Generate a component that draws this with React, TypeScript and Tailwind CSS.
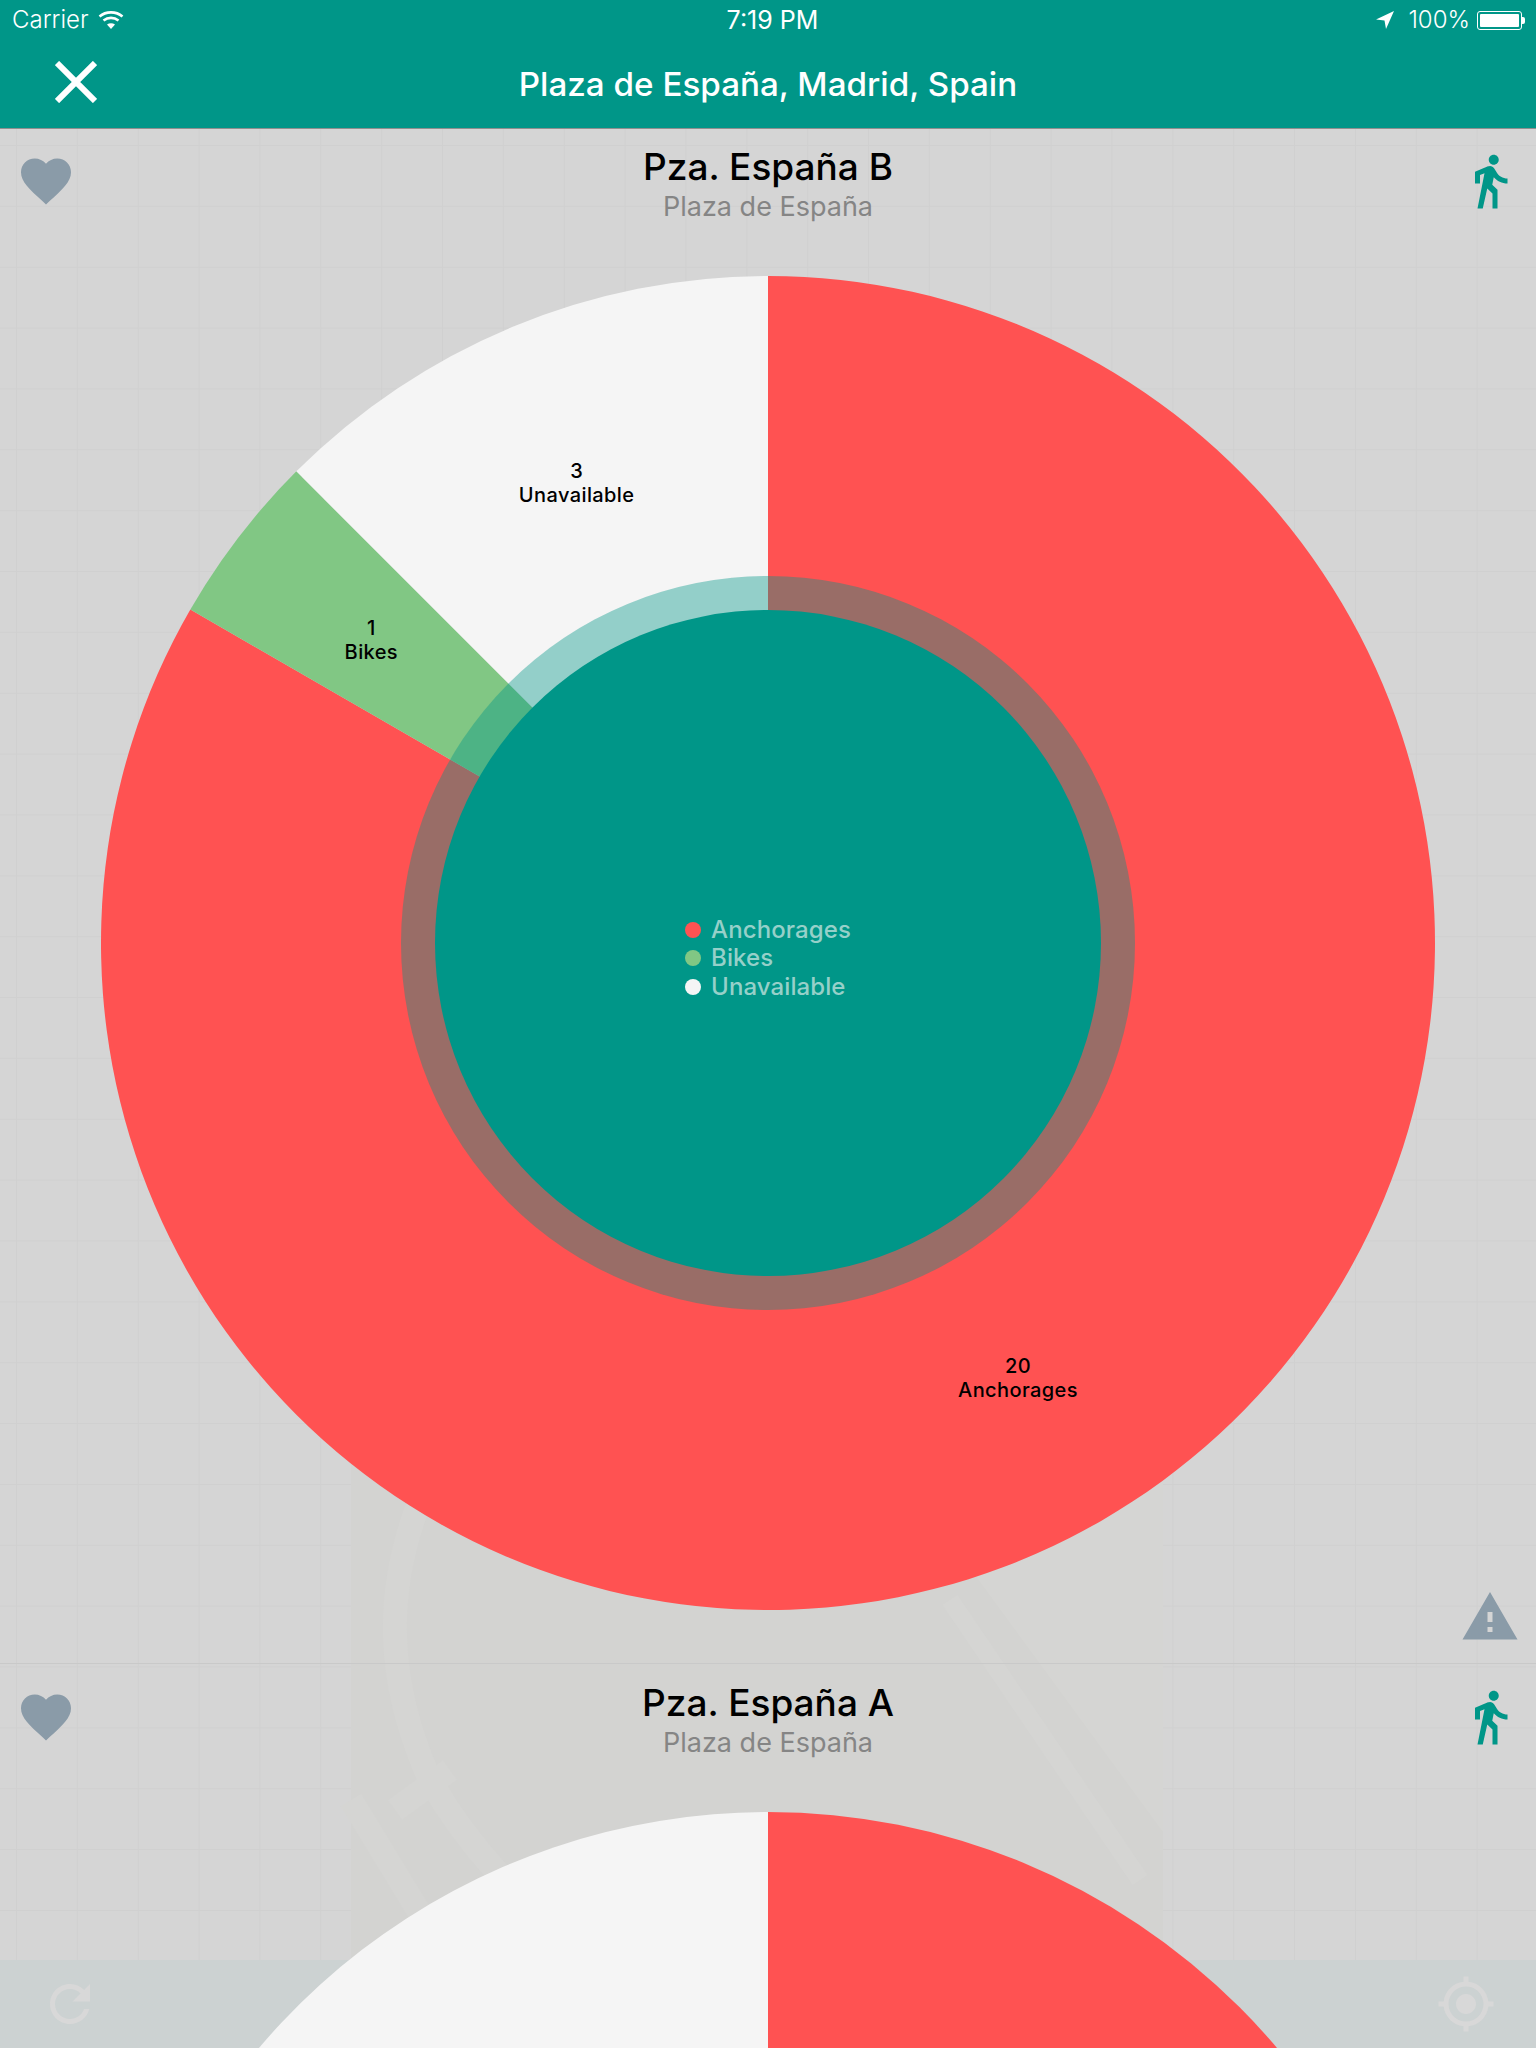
import { Fragment } from "react";

const RED = "#ff5252";
const GREEN = "#81c784";
const WHITE = "#f5f5f5";
const TEAL = "#009688";

const SIZE = 1334;
const C = SIZE / 2;
const R = 667;

interface Slice {
  label: string;
  value: number;
  color: string;
}

interface Station {
  name: string;
  slices: Slice[];
  // the second card runs off the bottom of the page, its texts are below the fold
  belowFold?: boolean;
}

const stations: Station[] = [
  {
    name: "Pza. España B",
    slices: [
      { label: "Anchorages", value: 20, color: RED },
      { label: "Bikes", value: 1, color: GREEN },
      { label: "Unavailable", value: 3, color: WHITE },
    ],
  },
  {
    name: "Pza. España A",
    belowFold: true,
    slices: [
      { label: "Anchorages", value: 12, color: RED },
      { label: "Bikes", value: 2, color: GREEN },
      { label: "Unavailable", value: 10, color: WHITE },
    ],
  },
];

function point(angle: number, r: number) {
  const rad = (angle * Math.PI) / 180;
  return [C + r * Math.sin(rad), C - r * Math.cos(rad)];
}

function slicePath(start: number, end: number) {
  const [x1, y1] = point(start, R);
  const [x2, y2] = point(end, R);
  const large = end - start > 180 ? 1 : 0;
  return `M${C} ${C}L${x1} ${y1}A${R} ${R} 0 ${large} 1 ${x2} ${y2}Z`;
}

function Donut({ slices, belowFold }: { slices: Slice[]; belowFold?: boolean }) {
  const total = slices.reduce((sum, s) => sum + s.value, 0);
  let angle = 0;
  const arcs = slices.map((s) => {
    const start = angle;
    angle += (s.value / total) * 360;
    return { ...s, start, end: angle };
  });

  return (
    <div className="relative w-[1334px] h-[1334px] shrink-0">
      <svg width={SIZE} height={SIZE} viewBox={`0 0 ${SIZE} ${SIZE}`}>
        {arcs.map((a) => (
          <path key={a.label} d={slicePath(a.start, a.end)} fill={a.color} />
        ))}
        <circle cx={C} cy={C} r={367} fill={TEAL} fillOpacity={0.4} />
        <circle cx={C} cy={C} r={333} fill={TEAL} />
        {!belowFold &&
          arcs.map((a) => {
            const [x, y] = point((a.start + a.end) / 2, 500);
            return (
              <Fragment key={a.label}>
                <text x={x} y={y - 3.5} textAnchor="middle" fontSize={20} fontWeight={500} letterSpacing={0.4} fill="#000">
                  {a.value}
                </text>
                <text x={x} y={y + 20.5} textAnchor="middle" fontSize={20} fontWeight={500} letterSpacing={0.4} fill="#000">
                  {a.label}
                </text>
              </Fragment>
            );
          })}
      </svg>
      {/* legend sits in the hole */}
      {!belowFold && (
        <div className="absolute inset-0 flex items-center justify-center pt-[30px]">
          <ul className="flex flex-col">
            {arcs.map((a) => (
              <li key={a.label} className="flex items-center gap-[10px] h-[28.5px]">
                <span className="w-4 h-4 rounded-full" style={{ backgroundColor: a.color }} />
                <span className="text-[24px] font-medium text-[#96d0c9] leading-none tracking-[0.1px]">{a.label}</span>
              </li>
            ))}
          </ul>
        </div>
      )}
    </div>
  );
}

function HeartIcon() {
  return (
    <svg width="60" height="60" viewBox="0 0 24 24" fill="#8a9ba8">
      <path d="M12 21.35l-1.45-1.32C5.4 15.36 2 12.28 2 8.5 2 5.42 4.42 3 7.5 3c1.74 0 3.41.81 4.5 2.09C13.09 3.81 14.76 3 16.5 3 19.58 3 22 5.42 22 8.5c0 3.78-3.4 6.86-8.55 11.54L12 21.35z" />
    </svg>
  );
}

function WalkIcon() {
  return (
    <svg width="60" height="60" viewBox="0 0 24 24" fill={TEAL}>
      <path d="M13.5 5.5c1.1 0 2-.9 2-2s-.9-2-2-2-2 .9-2 2 .9 2 2 2zM9.8 8.9L7 23h2.1l1.8-8 2.1 2v6h2v-7.5l-2.1-2 .6-3C14.8 12 16.8 13 19 13v-2c-1.9 0-3.5-1-4.3-2.4l-1-1.6c-.4-.6-1-1-1.7-1-.3 0-.5.1-.8.1L6 8.3V13h2V9.6l1.8-.7" />
    </svg>
  );
}

function WarningIcon() {
  return (
    <svg width="60" height="60" viewBox="0 0 24 24" fill="#8a9ba8">
      <path d="M1 21h22L12 2 1 21zm12-3h-2v-2h2v2zm0-4h-2v-4h2v4z" />
    </svg>
  );
}

function StationCard({ station }: { station: Station }) {
  return (
    <section className="relative h-[1536px] shrink-0 border-b border-[#c9c9c9]">
      <div className="flex items-start justify-between px-4 h-[148px]">
        <div className="pt-[23px]">
          <HeartIcon />
        </div>
        <div className="flex flex-col items-center pt-[17px]">
          <h2 className="text-[37px] leading-[44px] font-medium text-black">{station.name}</h2>
          <p className="text-[27px] leading-[36px] text-[#858585]">Plaza de España</p>
        </div>
        <div className="pt-[23px]">
          <WalkIcon />
        </div>
      </div>
      <div className="flex justify-center">
        <Donut slices={station.slices} belowFold={station.belowFold} />
      </div>
      <div className="absolute right-4 bottom-4">
        <WarningIcon />
      </div>
    </section>
  );
}

function StatusBar() {
  return (
    <div className="flex items-center justify-between h-10 pl-3 pr-[11px] text-white text-[24px] font-light leading-none">
      <div className="flex items-center gap-[9px] w-[300px]">
        <span>Carrier</span>
        <svg width="26" height="20" viewBox="0 0 26 20" fill="none" stroke="#fff" strokeWidth="2.6">
          <path d="M1.5 6.5C8 1 18 1 24.5 6.5" />
          <path d="M5.5 10.5C10 7 16 7 20.5 10.5" />
          <path d="M13 19l-4-4.6c2.4-1.6 5.600-1.6 8 0z" fill="#fff" stroke="none" />
        </svg>
      </div>
      <span className="font-normal text-[25px] ml-2">7:19 PM</span>
      <div className="flex items-center justify-end w-[300px]">
        <svg width="18" height="18" viewBox="0 0 18 18" fill="#fff">
          <path d="M18 0L0 8.500l8.500 1 1.500 8.500z" />
        </svg>
        <span className="ml-[14px]">100%</span>
        <div className="ml-[7px] w-[45px] h-[19px] border border-white rounded-[3px] p-[2px]">
          <div className="w-full h-full bg-white rounded-[1px]" />
        </div>
        <div className="w-[3px] h-[7px] bg-white rounded-r-[2px]" />
      </div>
    </div>
  );
}

function NavBar() {
  return (
    <div className="relative flex items-center justify-center h-[88px] pt-[2px]">
      <button className="absolute left-[55px] top-[21px]">
        <svg width="42" height="42" viewBox="0 0 42 42" stroke="#fff" strokeWidth="6" className="block">
          <path d="M2 2L40 40M40 2L2 40" />
        </svg>
      </button>
      <h1 className="text-[33.2px] font-medium text-white">Plaza de España, Madrid, Spain</h1>
    </div>
  );
}

export default function App() {
  return (
    <div className="relative h-[2048px] overflow-hidden bg-[#d5d5d5] font-[Inter,sans-serif] bg-[linear-gradient(to_right,#d0d0d0_1px,transparent_1px),linear-gradient(to_bottom,#d0d0d0_1px,transparent_1px)] bg-[size:60.87px_60.87px] bg-[position:16px_145px]">
      {/* faint map under the list */}
      <svg className="absolute left-0 top-0" width="1536" height="2048" fill="none">
        <rect x="351" y="1100" width="812" height="860" fill="#d3d3d1" />
        <path d="M975 1575L1163 1832V1100H900z" fill="#d5d5d3" />
        <path d="M420 1500C385 1590 385 1680 430 1780C470 1850 520 1900 580 1950" stroke="#d5d5d3" strokeWidth="24" />
        <path d="M351 1800L430 1930" stroke="#d5d5d3" strokeWidth="24" />
        <path d="M395 1810L450 1770" stroke="#d5d5d3" strokeWidth="24" />
        <path d="M950 1600L1140 1880" stroke="#d5d5d3" strokeWidth="18" />
      </svg>

      {/* toolbar stays behind the scrolling list */}
      <div className="absolute left-0 right-0 bottom-0 h-[88px] px-10 flex items-center justify-between bg-[#ccd2d2]">
        <svg width="60" height="60" viewBox="0 0 24 24" fill="#d8d8d8">
          <path d="M17.65 6.35C16.2 4.9 14.21 4 12 4c-4.42 0-7.99 3.58-7.99 8s3.57 8 7.99 8c3.73 0 6.84-2.55 7.73-6h-2.08c-.82 2.33-3.04 4-5.65 4-3.31 0-6-2.69-6-6s2.69-6 6-6c1.66 0 3.14.69 4.22 1.78L13 11h7V4l-2.35 2.35z" />
        </svg>
        <svg width="60" height="60" viewBox="0 0 24 24" fill="#d8d8d8">
          <path d="M12 8c-2.21 0-4 1.79-4 4s1.790 4 4 4 4-1.790 4-4-1.790-4-4-4zm8.940 3c-.46-4.170-3.770-7.480-7.940-7.940V1h-2v2.060C6.830 3.520 3.520 6.830 3.060 11H1v2h2.060c.46 4.170 3.770 7.480 7.940 7.940V23h2v-2.060c4.170-.46 7.480-3.770 7.940-7.940H23v-2h-2.060zM12 19c-3.870 0-7-3.130-7-7s3.130-7 7-7 7 3.130 7 7-3.130 7-7 7z" />
        </svg>
      </div>

      <div className="relative flex flex-col">
        <header className="relative z-10 h-[128px] shrink-0 bg-[#009688] shadow-[0_1px_0_#8f8f8f]">
          <StatusBar />
          <NavBar />
        </header>
        {stations.map((station) => (
          <StationCard key={station.name} station={station} />
        ))}
      </div>
    </div>
  );
}
